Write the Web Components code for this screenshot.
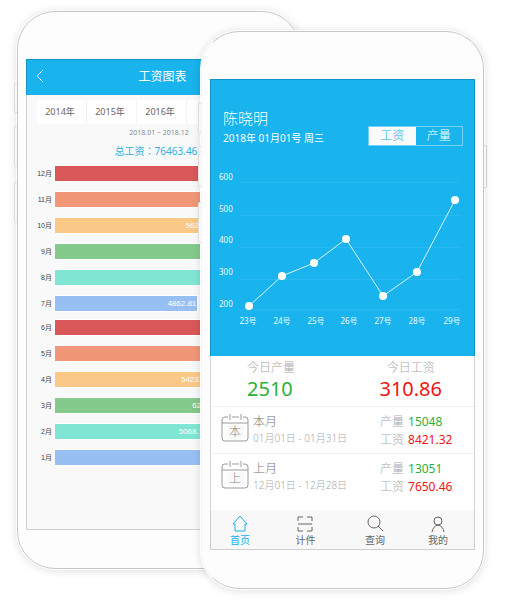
<!DOCTYPE html>
<html lang="zh-CN">
<head>
<meta charset="utf-8">
<meta name="viewport" content="width=device-width, initial-scale=1">
<title>工资</title>
<style>
  body {
    margin: 0;
    background: #fff;
    color: #666;
    font-family: "Noto Sans", "Noto Sans CJK SC", sans-serif;
  }
</style>
</head>
<body>
<phone-stage>
  <phone-frame slot="back">
    <salary-chart>
      <year-tabs slot="tabs"></year-tabs>
      <bar-group>
        <month-bar month="12月" size="80" color="#d95759"></month-bar>
        <month-bar month="11月" size="82" color="#f19777"></month-bar>
        <month-bar month="10月" size="71" color="#fac988">562</month-bar>
        <month-bar month="9月" size="84" color="#84ca8c"></month-bar>
        <month-bar month="8月" size="88" color="#80e6d3"></month-bar>
        <month-bar month="7月" size="63" color="#97bff3">4862.81</month-bar>
      </bar-group>
      <bar-group>
        <month-bar month="6月" size="84" color="#d95759"></month-bar>
        <month-bar month="5月" size="82" color="#f19777"></month-bar>
        <month-bar month="4月" size="69" color="#fac988">5423.</month-bar>
        <month-bar month="3月" size="74" color="#84ca8c">62</month-bar>
        <month-bar month="2月" size="68" color="#80e6d3">5068.1</month-bar>
        <month-bar month="1月" size="86" color="#97bff3"></month-bar>
      </bar-group>
    </salary-chart>
  </phone-frame>
  <phone-frame slot="front" front>
    <home-screen>
      <daily-totals></daily-totals>
      <month-row mark="本" output="15048" pay="8421.32" line>
        <span slot="name">本月</span><span slot="range">01月01日 - 01月31日</span>
      </month-row>
      <month-row mark="上" output="13051" pay="7650.46">
        <span slot="name">上月</span><span slot="range">12月01日 - 12月28日</span>
      </month-row>
      <tab-bar slot="footer"></tab-bar>
    </home-screen>
  </phone-frame>
</phone-stage>

<script>
const define = (name, render) => customElements.define(name, class extends HTMLElement {
  constructor() {
    super();
    this.attachShadow({ mode: 'open' });
  }
  connectedCallback() {
    const t = document.createElement('template');
    t.innerHTML = render(this);
    this.shadowRoot.replaceChildren(t.content.cloneNode(true));
  }
});

/* Two phones sharing overlapping grid areas */
define('phone-stage', () => `
  <style>
    :host {
      display: grid;
      max-width: 640px;
      margin: 0 auto;
      padding: 11px 21px 15px 17px;
      grid-template-columns: 184fr 99fr 184fr;
      grid-template-rows: 20px auto 20px;
    }
    ::slotted([slot=back]) { grid-column: 1 / 3; grid-row: 1 / 3; }
    ::slotted([slot=front]) { grid-column: 2 / 4; grid-row: 2 / 4; z-index: 1; }
  </style>
  <slot name="back"></slot><slot name="front"></slot>`);

define('phone-frame', () => `
  <style>
    :host {
      display: flex;
      position: relative;
      box-sizing: border-box;
      min-width: 0;
      padding: 47px 8px 38px;
      border: 1px solid #c6c6c6;
      border-radius: 38px;
      background: #fdfdfd;
      box-shadow: inset 0 0 0 1px #fff, 0 0 0 1px #fff, 0 1px 8px 1px rgba(0,0,0,.13);
    }
    :host([front]) { border-left-color: #f4f4f4; }
    .screen { position: relative; flex: 1; min-width: 0; display: flex; }
    .screen::after {
      content: ""; position: absolute; inset: 0;
      border: 1px solid rgba(0,0,0,.17); pointer-events: none;
    }
    ::slotted(*) { flex: 1; min-width: 0; }
    i {
      position: absolute; left: -4px; width: 3px; box-sizing: border-box;
      border: 1px solid #ddd; border-right: 0; border-radius: 2px 0 0 2px; background: #f8f8f8;
    }
    i:nth-of-type(1) { top: 71px; height: 30px; }
    i:nth-of-type(2) { top: 114px; height: 41px; }
    i:nth-of-type(3) { top: 170px; height: 41px; }
    i:nth-of-type(4) {
      top: 113px; height: 43px; left: auto; right: -4px;
      border: 1px solid #ccc; border-left: 0; border-radius: 0 2px 2px 0;
    }
  </style>
  <i></i><i></i><i></i><i></i>
  <div class="screen"><slot></slot></div>`);

define('salary-chart', () => `
  <style>
    :host { display: block; background: #f9f9f9; }
    header {
      display: grid; grid-template-columns: 28px 1fr 20px; align-items: center;
      height: 36px; background: #19b3ee; color: #fff;
    }
    button { display: flex; justify-content: center; padding: 0 0 3px; border: 0; background: none; color: inherit; }
    h1 { margin: 0; font-size: 12px; line-height: 18px; font-weight: 400; text-align: center; }
    main { display: block; padding: 5px 10px 5px 11px; }
    p { margin: 0; text-align: center; }
    .range { padding-top: 2px; font-size: 7px; line-height: 14px; color: #888; }
    .total {
      padding: 2px 6px 6px 0; font-size: 10px; line-height: 18px; color: #2fb0e4;
      font-family: "Noto Sans", "Noto Sans CJK TC", sans-serif;
    }
    .bars { display: grid; gap: 9px; }
  </style>
  <header>
    <button aria-label="返回"><svg width="10" height="14" viewBox="0 0 10 14" fill="none" stroke="currentColor"><path d="M8 1 2 7l6 6"/></svg></button>
    <h1>工资图表</h1>
  </header>
  <main>
    <slot name="tabs"></slot>
    <p class="range">2018.01 ~ 2018.12</p>
    <p class="total" lang="zh-TW">总工资：76463.46</p>
    <div class="bars"><slot></slot></div>
  </main>`);

define('year-tabs', () => `
  <style>
    :host { display: grid; grid-template-columns: 41fr 41fr 41fr 77fr; height: 24px; background: #fff; }
    button {
      padding: 0 3px 0 0; border: 0; border-right: 1px solid #f4f4f4; background: none;
      font: 9px/24px "Noto Sans", "Noto Sans CJK SC", sans-serif; color: #666;
    }
  </style>
  <button>2014年</button><button>2015年</button><button>2016年</button>`);

define('bar-group', () => `
  <style>:host { display: grid; gap: 11px; }</style><slot></slot>`);

define('month-bar', el => `
  <style>
    :host {
      display: grid; grid-template-columns: 15px 1fr; gap: 3px; height: 15px;
      font: 8px/15px "Liberation Sans", "Noto Sans CJK SC", sans-serif; color: #444;
    }
    .month { display: flex; justify-content: flex-end; font-size: 7px; white-space: nowrap; }
    .bar {
      display: flex; justify-content: flex-end; box-sizing: border-box; padding-right: 1px;
      width: ${el.getAttribute('size')}%; background: ${el.getAttribute('color')};
      box-shadow: 0 0 0 1px #fff; color: #fff;
    }
    .value { width: 29px; }
  </style>
  <span class="month">${el.getAttribute('month')}</span>
  <div class="bar"><span class="value"><slot></slot></span></div>`);

define('home-screen', () => `
  <style>
    :host { display: flex; flex-direction: column; background: #fff; }
    .hero { background: #19b3ee; color: #fff; }
    .top { display: flex; justify-content: space-between; padding: 29px 12px 0 13px; }
    h2, p { margin: 0; font-weight: 400; line-height: 20px; }
    h2 { font-size: 15px; font-weight: 300; }
    p { font-size: 10px; }
    .foot { margin-top: auto; padding-top: 10px; }
  </style>
  <div class="hero">
    <div class="top">
      <div><h2>陈晓明</h2><p>2018年 01月01号 周三</p></div>
      <mode-switch></mode-switch>
    </div>
    <line-chart></line-chart>
  </div>
  <slot></slot>
  <div class="foot"><slot name="footer"></slot></div>`);

define('mode-switch', () => `
  <style>
    :host {
      display: grid; grid-template-columns: 1fr 1fr; align-self: flex-end; box-sizing: border-box;
      width: 95px; height: 20px; margin-bottom: 2px; border: 1px solid #75d1f5;
    }
    button {
      padding: 0; border: 0; background: none; color: #fff;
      font: 300 12px/18px "Noto Sans", "Noto Sans CJK SC", sans-serif;
    }
    .on { background: #fafafa; color: #19b3ee; }
  </style>
  <button class="on" aria-pressed="true">工资</button><button aria-pressed="false">产量</button>`);

define('line-chart', () => {
  const grid = [[600, 34, 32], [500, 67, 64], [400, 99, 95], [300, 131, 127], [200, 161, 159]];
  const pts = [[39, 158], [72, 128], [104, 115], [136, 91], [173, 148], [207, 124], [245, 52]];
  const days = [38, 72, 106, 139, 173, 207, 242];
  return `
  <style>
    :host { display: block; }
    svg { display: block; width: 100%; }
    text { font-size: 8px; fill: #eefaff; }
  </style>
  <svg viewBox="0 0 265 208" role="img" aria-label="工资走势">
    ${grid.map(([v, y, t]) => `<path d="M30 ${y}H250" stroke="#29b8f0" shape-rendering="crispEdges"/><text x="9" y="${t}">${v}</text>`).join('')}
    <polyline points="${pts.join(' ')}" fill="none" stroke="#d9f3fd"/>
    ${pts.map(([x, y]) => `<circle cx="${x}" cy="${y}" r="4" fill="#fff"/>`).join('')}
    ${days.map((x, i) => `<text x="${x}" y="176" text-anchor="middle">${23 + i}号</text>`).join('')}
  </svg>`;
});

define('daily-totals', () => `
  <style>
    :host {
      display: flex; justify-content: space-between; padding: 3px 33px 5px 37px;
      border-bottom: 1px solid #f1f1f1;
    }
    dl { margin: 0; }
    dt { font-size: 12px; line-height: 18px; font-weight: 300; color: #aaa; }
    dd { margin: 0; font-size: 20px; line-height: 24px; color: #2bb13c; }
    .pay { text-align: center; }
    .pay dd { color: #f01414; }
  </style>
  <dl><dt>今日产量</dt><dd>2510</dd></dl>
  <dl class="pay"><dt>今日工资</dt><dd>310.86</dd></dl>`);

define('month-row', el => `
  <style>
    :host { display: flex; padding: 6px 0 4px 11px; color: #aaa; }
    :host([line]) { border-bottom: 1px solid #f1f1f1; }
    svg { flex: none; margin: 1px 4px 0 0; }
    svg text { font-size: 12px; font-weight: 300; fill: #888; }
    .when { flex: 1; padding-top: 1px; line-height: 16px; white-space: nowrap; }
    .name { font-size: 12px; font-weight: 300; color: #777; }
    .range { font-size: 10px; font-weight: 300; }
    dl { width: 95px; margin: 0; font-size: 12px; line-height: 18px; }
    dl div { display: flex; gap: 4px; }
    dt { font-weight: 300; color: #aaa; }
    dd { margin: 0; color: #2bb13c; }
    .pay { color: #f01414; }
  </style>
  <svg width="28" height="28" viewBox="0 0 28 28" fill="none" stroke="#999" aria-hidden="true">
    <path fill="#f9f9f9" stroke="none" d="M6 11h17v13H6z"/>
    <path d="M7 3H4Q1 3 1 6v18q0 3 3 3h20q3 0 3-3V6q0-3-3-3h-2M11 3h7M1 9h26M9 0v6M20 0v6"/>
    <text x="14" y="22" text-anchor="middle" stroke="none">${el.getAttribute('mark')}</text>
  </svg>
  <div class="when">
    <div class="name"><slot name="name"></slot></div>
    <div class="range"><slot name="range"></slot></div>
  </div>
  <dl>
    <div><dt>产量</dt><dd>${el.getAttribute('output')}</dd></div>
    <div><dt>工资</dt><dd class="pay">${el.getAttribute('pay')}</dd></div>
  </dl>`);

define('tab-bar', () => {
  const tabs = [
    ['首页', '<path d="M1 9 8 1l7 8h-2v7H3V9z" stroke-linejoin="round"/>'],
    ['计件', '<path d="M1 6V2h5M10 2h5v4M1 9h14M1 12v4h5M10 16h5v-4"/>'],
    ['查询', '<circle cx="7" cy="7" r="6"/><path d="m11 11 5 5"/>'],
    ['我的', '<circle cx="8" cy="6" r="4"/><path d="M2 17q1-6 6-7 5 1 6 7"/>'],
  ];
  return `
  <style>
    :host { display: block; background: #f8f8f8; }
    nav {
      display: grid; grid-template-columns: 58fr 73fr 66fr 60fr;
      padding: 5px 7px 2px 1px;
    }
    a {
      display: flex; flex-direction: column; align-items: center; color: #666;
      font-size: 10px; line-height: 15px; text-decoration: none;
    }
    a[aria-current] { color: #19b3ee; }
    svg { overflow: visible; }
  </style>
  <nav>${tabs.map(([t, d], i) => `<a href="#tab${i}" ${i ? '' : 'aria-current="page"'}><svg width="17" height="18" viewBox="0 0 17 18" fill="none" stroke="currentColor" aria-hidden="true">${d}</svg>${t}</a>`).join('')}</nav>`;
});
</script>
</body>
</html>
